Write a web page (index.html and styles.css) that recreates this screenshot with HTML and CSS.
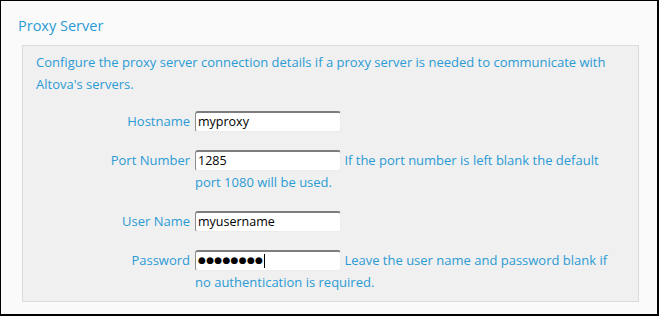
FILE: index.html
```html
<!DOCTYPE html>
<html lang="en">
<head>
<meta charset="utf-8">
<title>Proxy Server</title>
<link rel="stylesheet" href="styles.css">
</head>
<body>
<div class="frame">
  <h2 class="title">Proxy Server</h2>
  <section class="panel">
    <p class="intro">Configure the proxy server connection details if a proxy server is needed to communicate with Altova's servers.</p>
    <div class="form">
      <label class="label" for="host">Hostname</label>
      <div class="cell"><input class="field" id="host" type="text" value="myproxy"></div>

      <label class="label" for="port">Port Number</label>
      <div class="cell"><input class="field" id="port" type="text" value="1285"> If the port number is left blank the default port 1080 will be used.</div>

      <label class="label" for="user">User Name</label>
      <div class="cell"><input class="field" id="user" type="text" value="myusername"></div>

      <span class="label">Password</span>
      <div class="cell"><span class="field pass" role="textbox" aria-label="Password"><span class="dots">●●●●●●●●</span><span class="caret"></span></span> Leave the user name and password blank if no authentication is required.</div>
    </div>
  </section>
</div>
</body>
</html>
```

FILE: styles.css
```css
html, body {
  margin: 0;
  padding: 0;
}
body {
  width: 659px;
  height: 316px;
  background: #fafafa;
  font-family: "Open Sans", "Noto Sans", sans-serif;
  color: #2b9bd5;
}
.frame {
  box-sizing: border-box;
  width: 659px;
  height: 316px;
  border-style: solid;
  border-color: #000;
  border-width: 1px 2px 2px 1px;
  background: #fafafa;
  display: flex;
  flex-direction: column;
  padding: 0 18px 12px 17px;
}
.title {
  margin: 0;
  font-weight: normal;
  font-size: 14.5px;
  line-height: 20px;
  padding: 15px 0 9px 0;
  color: #2b9bd5;
}
.panel {
  flex: 1;
  margin-left: 4px;
  background: #f0f0f0;
  border: 1px solid #dcdcdc;
  padding: 5px 13px 0 13px;
}
.intro {
  margin: 0;
  font-size: 13px;
  line-height: 22px;
}
.form {
  margin-top: 14.5px;
  display: grid;
  grid-template-columns: 154px 1fr;
  column-gap: 5px;
  row-gap: 17px;
  font-size: 13px;
  line-height: 22px;
}
.label {
  text-align: right;
  color: #2b9bd5;
}
.field {
  box-sizing: border-box;
  display: inline-block;
  vertical-align: middle;
  width: 146px;
  height: 21px;
  margin: -2px 0 0 0;
  padding: 0 2px;
  background: #fff;
  border: 1px solid #ececec;
  border-top: 2px solid #7d7d7d;
  border-left: 1px solid #8c8c8c;
  border-radius: 3px;
  font-family: "Open Sans", "Noto Sans", sans-serif;
  font-size: 12.5px;
  line-height: 17px;
  color: #000;
  outline: none;
}
.pass {
  display: inline-flex;
  align-items: center;
  white-space: nowrap;
}
.dots {
  font-family: "DejaVu Sans", sans-serif;
  font-size: 9px;
  letter-spacing: 0.3px;
  line-height: 17px;
}
.caret {
  width: 1px;
  height: 14px;
  background: #000;
  margin-left: 1px;
}
```
